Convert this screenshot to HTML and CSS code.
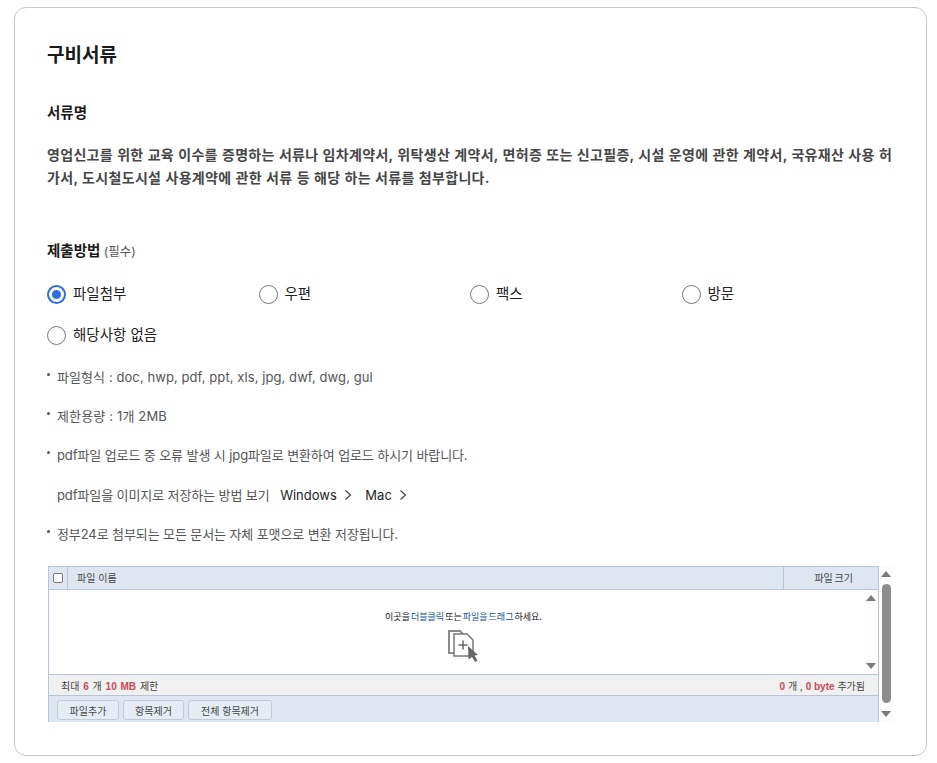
FILE: index.html
```html
<!DOCTYPE html>
<html lang="ko">
<head>
<meta charset="utf-8">
<title>구비서류</title>
<link rel="stylesheet" href="styles.css">
</head>
<body>
<main class="card">
  <h2 class="title">구비서류</h2>
  <h3 class="doc-name">서류명</h3>
  <p class="doc-desc">영업신고를 위한 교육 이수를 증명하는 서류나 임차계약서, 위탁생산 계약서, 면허증 또는 신고필증, 시설 운영에 관한 계약서, 국유재산 사용 허가서, 도시철도시설 사용계약에 관한 서류 등 해당 하는 서류를 첨부합니다.</p>
  <h3 class="method">제출방법 <span class="req">(필수)</span></h3>
  <div class="radios">
    <label class="radio"><span class="dot on"></span>파일첨부</label>
    <label class="radio"><span class="dot"></span>우편</label>
    <label class="radio"><span class="dot"></span>팩스</label>
    <label class="radio"><span class="dot"></span>방문</label>
    <label class="radio"><span class="dot"></span>해당사항 없음</label>
  </div>
  <ul class="notes">
    <li class="wide">파일형식 : doc, hwp, pdf, ppt, xls, jpg, dwf, dwg, gul</li>
    <li class="wider">제한용량 : 1개 2MB</li>
    <li>pdf파일 업로드 중 오류 발생 시 jpg파일로 변환하여 업로드 하시기 바랍니다.</li>
    <li class="plain">pdf파일을 이미지로 저장하는 방법 보기
      <a class="lnk">Windows<svg class="chev" viewBox="0 0 8 12"><path d="M1.500 1.500 6.500 6 1.500 10.500"/></svg></a>
      <a class="lnk">Mac<svg class="chev" viewBox="0 0 8 12"><path d="M1.500 1.500 6.500 6 1.500 10.500"/></svg></a>
    </li>
    <li>정부24로 첨부되는 모든 문서는 자체 포맷으로 변환 저장됩니다.</li>
  </ul>
  <div class="uploader-wrap">
    <div class="uploader">
      <div class="up-head">
        <div class="up-check"><span class="box"></span></div>
        <div class="up-name">파일 이름</div>
        <div class="up-size">파일 크기</div>
      </div>
      <div class="up-body">
        <div class="drop">
          <p class="drop-text">이곳을 <b>더블클릭</b> 또는 <b>파일을 드래그</b> 하세요.</p>
          <svg class="drop-icon" viewBox="0 0 32 33" width="32" height="33">
            <path class="pg back" d="M1 1H12L17 6V23H1Z"/>
            <path class="pg" d="M6 4H19L25 10V26H6Z"/>
            <path class="plus" d="M15 10.500V19.500M10.500 15H19.500"/>
            <path class="cur" d="M20 16 30 25 26.500 25.500 29.500 30.500 27 32 24 27 20.500 29.500Z"/>
          </svg>
        </div>
        <div class="in-scroll"><span class="up"></span><span class="down"></span></div>
      </div>
      <div class="up-status">
        <span>최대 <em>6</em> 개 <em>10 MB</em> 제한</span>
        <span class="tight"><em>0</em> 개 , <em>0 byte</em> 추가됨</span>
      </div>
      <div class="up-actions">
        <button class="btn b1">파일추가</button>
        <button class="btn b2">항목제거</button>
        <button class="btn b3">전체 항목제거</button>
      </div>
    </div>
    <div class="out-scroll"><span class="up"></span><span class="thumb"></span><span class="down"></span></div>
  </div>
</main>
</body>
</html>
```
FILE: styles.css
```css
* { box-sizing: border-box; }
html, body { margin: 0; height: 100%; }
body {
  padding: 7px 10px 7px 14px;
  background: #fff;
  font-family: Inter, "Noto Sans CJK KR", sans-serif;
  color: #1d1d1d;
  overflow: hidden;
}
.card {
  height: 749px;
  border: 1px solid #c6c6c6;
  border-radius: 12px;
  padding: 33px 32px 0;
  overflow: hidden;
}
.title { margin: 0; font-size: 19px; line-height: 30px; font-weight: 700; color: #1a1a1a; }
.doc-name { margin: 31px 0 0; font-size: 14.500px; line-height: 22px; font-weight: 700; color: #1a1a1a; }
.doc-desc { margin: 19px 0 0; font-size: 14px; line-height: 23px; font-weight: 700; word-spacing: 0.500px; letter-spacing: 0.320px; color: #464646; }
.method { margin: 51px 0 0; font-size: 14.500px; line-height: 22px; font-weight: 700; color: #1a1a1a; }
.req { font-size: 12.500px; font-weight: 400; color: #555; }
.radios { display: grid; grid-template-columns: repeat(4, 211.500px); row-gap: 17px; margin-top: 19px; }
.radio { display: flex; align-items: center; gap: 7px; font-size: 14.500px; line-height: 24px; color: #222; }
.dot { width: 19px; height: 19px; border: 1px solid #777; border-radius: 50%; background: #fff; }
.dot.on { border: 2px solid #2b6fe0; position: relative; }
.dot.on::after { content: ""; position: absolute; inset: 3px; border-radius: 50%; background: #2b6fe0; }
.notes { list-style: none; margin: 20px 0 0; padding: 0; }
.notes li { position: relative; padding-left: 10px; font-size: 13px; line-height: 20px; color: #555; margin-bottom: 19px; letter-spacing: -0.100px; }
.notes li.wide { letter-spacing: 0.080px; }
.notes li.wider { letter-spacing: 0.150px; }
.notes li::before { content: ""; position: absolute; left: 0; top: 6px; width: 3px; height: 3px; border-radius: 50%; background: #555; }
.notes li.plain { margin-top: 20px; }
.notes li.plain::before { display: none; }
.lnk { color: #1d1d1d; margin-left: 7px; letter-spacing: 0; }
.lnk + .lnk { margin-left: 10px; }
.chev { width: 8px; height: 12px; margin-left: 7px; vertical-align: -1px; fill: none; stroke: #444; stroke-width: 1.200; }
.uploader-wrap { display: flex; width: 845px; height: 156px; margin-top: 22px; margin-left: 1px; }
.uploader { width: 831px; height: 156px; border: 1px solid #b8c4d8; border-bottom: 0; display: flex; flex-direction: column; font-size: 10px; color: #444; }
.up-head { display: flex; height: 23px; background: #dfe6f1; border-bottom: 1px solid #b8c4d8; line-height: 23px; flex: none; }
.up-check { width: 19px; border-right: 1px solid #b8c4d8; display: flex; align-items: center; justify-content: center; }
.box { width: 10px; height: 10px; border: 1px solid #777; border-radius: 2px; background: #fff; }
.up-name { flex: 1; padding-left: 9px; }
.up-size { width: 95px; border-left: 1px solid #b8c4d8; text-align: right; padding-right: 25px; word-spacing: -1px; }
.up-body { flex: none; height: 85px; display: flex; background: #fff; border-bottom: 1px solid #b8c4d8; }
.drop { flex: 1; padding-left: 14px; text-align: center; }
.drop-text { margin: 21px 0 0; font-size: 9px; line-height: 12px; word-spacing: -1.500px; color: #111; }
.drop-text b { font-weight: 400; color: #0b4f9e; }
.drop-icon { display: block; margin: 7px auto 0; overflow: visible; }
.pg { fill: #fff; stroke: #777; stroke-width: 1.500; }
.pg.back { stroke: #8a8a8a; stroke-width: 2; }
.plus { fill: none; stroke: #666; stroke-width: 1.500; }
.cur { fill: #666; }
.in-scroll, .out-scroll { position: relative; background: #fcfcfc; flex: none; }
.in-scroll { width: 14px; }
.up, .down { position: absolute; left: 2px; width: 0; height: 0; border-left: 5px solid transparent; border-right: 5px solid transparent; }
.up { top: 5px; border-bottom: 6px solid #7a7a7a; }
.down { bottom: 5px; border-top: 6px solid #7a7a7a; }
.up-status { flex: none; height: 21px; display: flex; justify-content: space-between; align-items: center; padding: 0 13px 0 12px; background: #f0f0f0; border-bottom: 1px solid #b8c4d8; word-spacing: 1px; }
.up-status .tight { word-spacing: 0; }
.up-status em { font-family: "Liberation Sans", sans-serif; font-style: normal; font-weight: 700; color: #c9485b; }
.up-actions { flex: 1; display: flex; gap: 4px; padding: 4px 0 0 8px; background: #dfe6f1; align-items: flex-start; }
.btn { height: 20px; padding: 0; border: 1px solid #c3cad6; border-radius: 3px; background: #e6ecf4; font: inherit; color: #444; }
.b1 { width: 62px; }
.b2 { width: 61px; }
.b3 { width: 84px; }
.out-scroll { width: 14px; height: 156px; }
.thumb { position: absolute; left: 3px; top: 18px; width: 9px; height: 119px; border-radius: 5px; background: #8d8d8d; }
```
